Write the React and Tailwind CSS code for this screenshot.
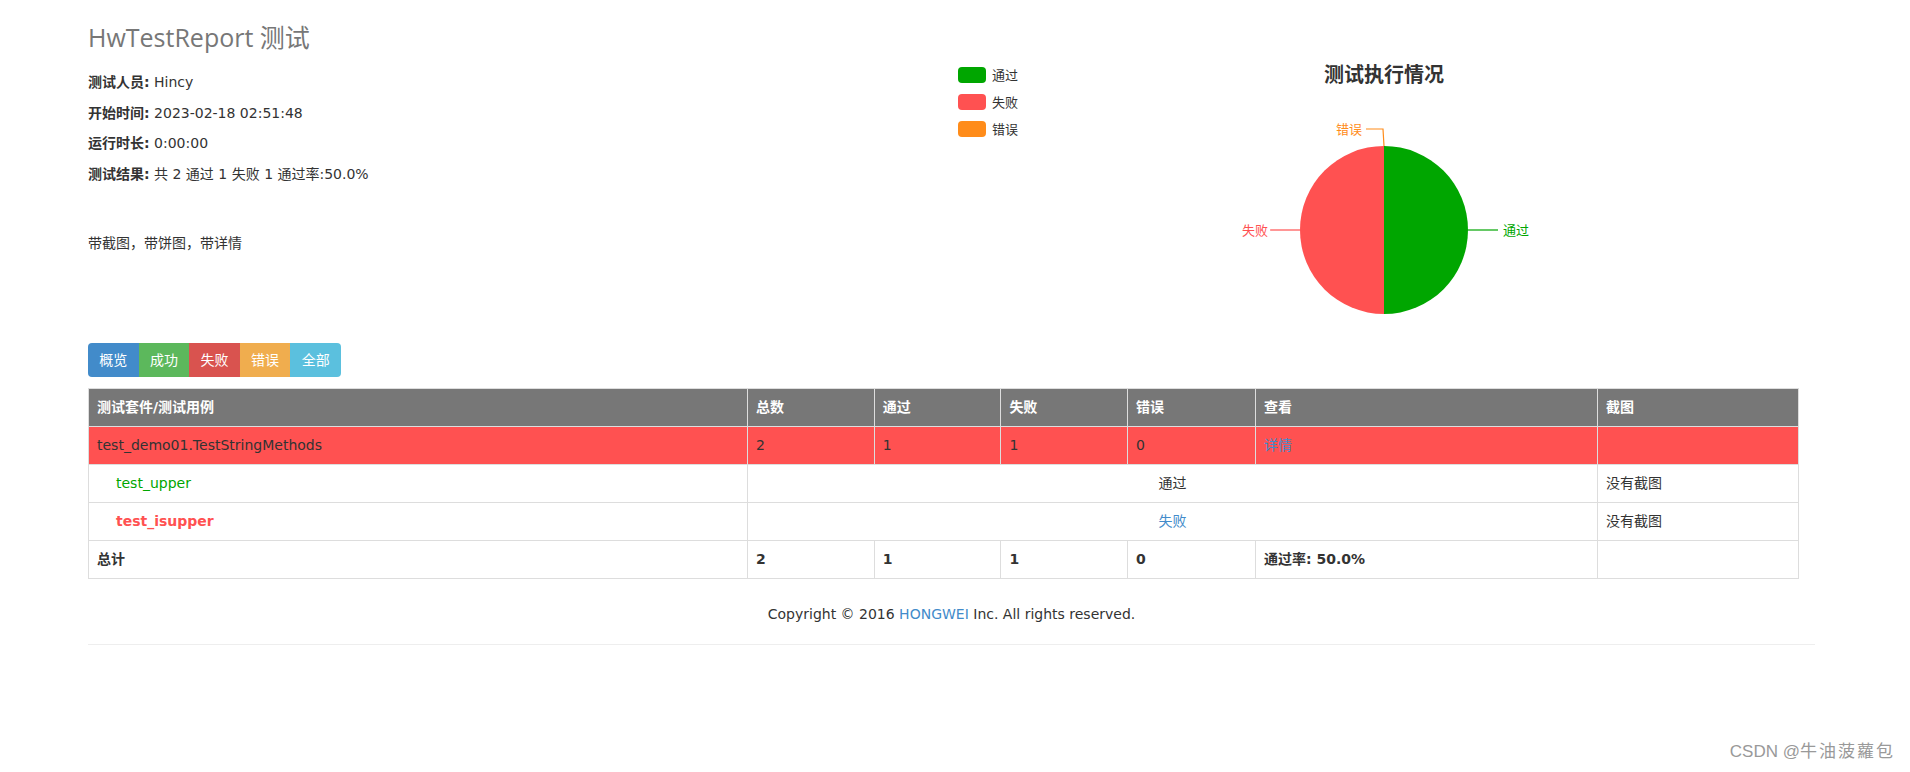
import React from "react";

const GREEN = "#00a600";
const RED = "#ff5151";
const ORANGE = "#ff8c1a";

function PieChart() {
  // echarts style pie: legend, title, two half slices, label lines
  return (
    <svg width="700" height="330" className="shrink-0">
      <g fontFamily="'DejaVu Sans','Noto Sans CJK SC',sans-serif" fontSize="13">
        <rect x="0" y="67" width="28" height="16" rx="4" fill={GREEN} />
        <text x="34" y="79.5" fill="#333">通过</text>
        <rect x="0" y="94" width="28" height="16" rx="4" fill={RED} />
        <text x="34" y="106.5" fill="#333">失败</text>
        <rect x="0" y="121" width="28" height="16" rx="4" fill={ORANGE} />
        <text x="34" y="133.5" fill="#333">错误</text>
      </g>
      <text
        x="426"
        y="82"
        textAnchor="middle"
        fontFamily="'Noto Sans CJK SC',sans-serif"
        fontWeight="700"
        fontSize="20"
        fill="#333"
      >
        测试执行情况
      </text>
      <path d="M426 230 L426 146 A84 84 0 0 1 426 314 Z" fill={GREEN} />
      <path d="M426 230 L426 314 A84 84 0 0 1 426 146 Z" fill={RED} />
      <g fontFamily="'Noto Sans CJK SC',sans-serif" fontSize="13">
        <line x1="510" y1="230" x2="540" y2="230" stroke={GREEN} strokeWidth="1.2" />
        <text x="545" y="234.5" fill={GREEN}>通过</text>
        <line x1="312" y1="230" x2="342" y2="230" stroke={RED} strokeWidth="1.2" />
        <text x="310" y="234.5" textAnchor="end" fill={RED}>失败</text>
        <polyline points="408,129 425,129 426,146" fill="none" stroke={ORANGE} strokeWidth="1.2" />
        <text x="404" y="133.5" textAnchor="end" fill={ORANGE}>错误</text>
      </g>
    </svg>
  );
}

function InfoLine({ label, value }) {
  return (
    <p className="leading-[30.5px]">
      <strong className="font-bold">{label}:</strong> {value}
    </p>
  );
}

const buttons = [
  { text: "概览", cls: "bg-[#428bca] rounded-l-[4px]" },
  { text: "成功", cls: "bg-[#5cb85c]" },
  { text: "失败", cls: "bg-[#d9534f]" },
  { text: "错误", cls: "bg-[#f0ad4e]" },
  { text: "全部", cls: "bg-[#5bc0de] rounded-r-[4px]" },
];

const td = "border border-[#ddd] px-[8px] h-[38px] align-middle";
const th = "border border-[#ddd] px-[8px] h-[38px] align-middle text-left font-bold text-white";

export default function App() {
  return (
    <div className="relative min-h-[772px] bg-white text-[14px] text-[#333] font-['DejaVu_Sans','Noto_Sans_CJK_SC',sans-serif]">
      <div className="pl-[88px] pr-[95px]">
        {/* header: info + chart */}
        <div className="flex h-[330px]">
          <div className="w-[870px] shrink-0 pt-[23px]">
            <h1 className="text-[25px] leading-[28px] text-[#777] font-['Open_Sans','Noto_Sans_CJK_SC',sans-serif]">
              HwTestReport 测试
            </h1>
            <div className="mt-[16px]">
              <InfoLine label="测试人员" value="Hincy" />
              <InfoLine label="开始时间" value="2023-02-18 02:51:48" />
              <InfoLine label="运行时长" value="0:00:00" />
              <InfoLine label="测试结果" value="共 2 通过 1 失败 1 通过率:50.0%" />
            </div>
            <p className="mt-[44px] leading-[20px]">带截图，带饼图，带详情</p>
          </div>
          <PieChart />
        </div>

        {/* filter buttons */}
        <div className="mt-[13px] flex">
          {buttons.map((b) => (
            <button
              key={b.text}
              type="button"
              className={`w-[50.6px] h-[34px] flex items-center justify-center text-white leading-[20px] ${b.cls}`}
            >
              {b.text}
            </button>
          ))}
        </div>

        {/* result table */}
        <table className="mt-[11px] w-[1710px] table-fixed border-collapse">
          <colgroup>
            <col className="w-[659px]" />
            <col className="w-[126.7px]" />
            <col className="w-[126.7px]" />
            <col className="w-[126.7px]" />
            <col className="w-[127.9px]" />
            <col className="w-[342px]" />
            <col className="w-[201px]" />
          </colgroup>
          <thead>
            <tr className="bg-[#777]">
              <th className={th}>测试套件/测试用例</th>
              <th className={th}>总数</th>
              <th className={th}>通过</th>
              <th className={th}>失败</th>
              <th className={th}>错误</th>
              <th className={th}>查看</th>
              <th className={th}>截图</th>
            </tr>
          </thead>
          <tbody>
            <tr className="bg-[#ff5151]">
              <td className={td}>test_demo01.TestStringMethods</td>
              <td className={td}>2</td>
              <td className={td}>1</td>
              <td className={td}>1</td>
              <td className={td}>0</td>
              <td className={td}>
                <a className="text-[#428bca]">详情</a>
              </td>
              <td className={td}></td>
            </tr>
            <tr>
              <td className={`${td} pl-[27px] text-[#00a600]`}>test_upper</td>
              <td className={`${td} text-center`} colSpan={5}>
                通过
              </td>
              <td className={td}>没有截图</td>
            </tr>
            <tr>
              <td className={`${td} pl-[27px] font-bold text-[#ff5151]`}>test_isupper</td>
              <td className={`${td} text-center`} colSpan={5}>
                <a className="text-[#428bca]">失败</a>
              </td>
              <td className={td}>没有截图</td>
            </tr>
            <tr className="font-bold">
              <td className={td}>总计</td>
              <td className={td}>2</td>
              <td className={td}>1</td>
              <td className={td}>1</td>
              <td className={td}>0</td>
              <td className={td}>通过率: 50.0%</td>
              <td className={td}></td>
            </tr>
          </tbody>
        </table>

        {/* footer */}
        <p className="mt-[25px] text-center leading-[20px]">
          Copyright © 2016 <a className="text-[#428bca]">HONGWEI</a> Inc. All rights reserved.
        </p>
        <hr className="mt-[20px] border-t border-[#eee]" />
      </div>

      <div className="absolute right-[15px] bottom-[10px] text-[17px] leading-[20px] text-[#999] font-['Liberation_Sans','Noto_Sans_CJK_SC',sans-serif]">
        CSDN @<span className="tracking-[2px]">牛油菠蘿包</span>
      </div>
    </div>
  );
}
